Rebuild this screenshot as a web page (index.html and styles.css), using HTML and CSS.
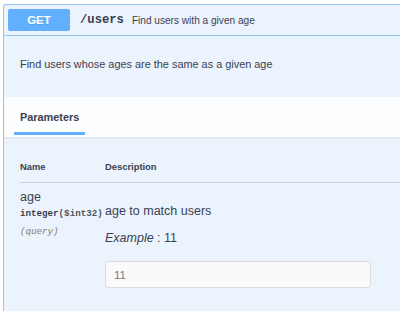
FILE: index.html
```html
<!DOCTYPE html>
<html>
<head>
<meta charset="utf-8">
<link rel="stylesheet" href="styles.css">
</head>
<body>
<div class="page">
  <div class="opblock">
    <div class="summary">
      <span class="method">GET</span>
      <span class="path">/users</span>
      <span class="summary-desc">Find users with a given age</span>
    </div>
    <div class="description">
      <p>Find users whose ages are the same as a given age</p>
    </div>
    <div class="section-header">
      <h4 class="tab"><span>Parameters</span></h4>
    </div>
    <div class="table-container">
      <div class="params">
        <div class="th">Name</div>
        <div class="th">Description</div>
        <div class="name-col">
          <div class="param-name">age</div>
          <div class="param-type">integer<span class="fmt">($int32)</span></div>
          <div class="param-in">(query)</div>
        </div>
        <div class="desc-col">
          <p class="param-desc">age to match users</p>
          <p class="example"><i>Example</i> : 11</p>
          <div class="input">11</div>
        </div>
      </div>
    </div>
  </div>
</div>
</body>
</html>
```
FILE: styles.css
```css
html, body {
  margin: 0;
  padding: 0;
  background: #ffffff;
  overflow: hidden;
}
.page {
  padding: 4px 0 0 3px;
  width: 440px;
  font-family: "Liberation Sans", Arial, sans-serif;
  color: #3b4151;
}
.opblock {
  border: 1px solid #93c5f8;
  border-right: none;
  border-radius: 3px 0 0 0;
  background: #ebf3fc;
  height: 340px;
}
.summary {
  display: flex;
  align-items: center;
  padding: 4px;
  border-bottom: 1px solid #93c5f8;
}
.method {
  width: 62px;
  height: 22px;
  display: flex;
  align-items: center;
  justify-content: center;
  background: #61affe;
  color: #ffffff;
  font-weight: bold;
  font-size: 11.5px;
  border-radius: 2px;
  text-shadow: 0 1px 0 rgba(0,0,0,0.1);
}
.path {
  margin-left: 10px;
  font-family: "Liberation Mono", "Courier New", monospace;
  font-weight: bold;
  font-size: 12.2px;
  color: #3b4151;
}
.summary-desc {
  margin-left: 8px;
  font-size: 10.1px;
  color: #3b4151;
}
.description {
  padding: 22px 16px 26px;
}
.description p {
  margin: 0;
  font-size: 10.9px;
  line-height: 13px;
}
.section-header {
  height: 40px;
  padding: 0 16px;
  background: rgba(255,255,255,0.82);
  box-shadow: 0 1px 2px rgba(0,0,0,0.08);
  display: flex;
  align-items: center;
}
.tab {
  margin: 0;
  font-size: 10.9px;
  font-weight: bold;
  line-height: 13px;
  color: #3b4151;
}
.tab span {
  position: relative;
}
.tab span::after {
  content: "";
  position: absolute;
  left: -10%;
  width: 120%;
  bottom: -12px;
  height: 3px;
  background: #61affe;
}
.table-container {
  padding: 16px 0 0 16px;
}
.params {
  display: grid;
  grid-template-columns: 85px 1fr;
}
.th {
  font-size: 9.4px;
  font-weight: bold;
  line-height: 10px;
  padding: 9px 0 10px;
  border-bottom: 1px solid rgba(59,65,81,0.2);
}
.name-col {
  padding-top: 7px;
}
.param-name {
  font-size: 12.5px;
  line-height: 15px;
}
.param-type {
  font-family: "Liberation Mono", "Courier New", monospace;
  font-weight: bold;
  font-size: 9.2px;
  line-height: 11px;
  padding: 3px 0;
}
.fmt {
  color: #505560;
}
.param-in {
  margin-top: 4px;
  font-family: "Liberation Mono", "Courier New", monospace;
  font-style: italic;
  font-size: 9.2px;
  line-height: 11px;
  color: #808080;
}
.desc-col {
  padding-top: 22px;
}
.desc-col p {
  margin: 0;
  font-size: 12.5px;
  line-height: 13px;
}
.example {
  padding-top: 14px;
}
.input {
  margin-top: 16px;
  height: 25px;
  width: 256px;
  padding: 0 0 0 8px;
  border: 1px solid #dcdcdc;
  border-radius: 3px;
  background: #fafafa;
  display: flex;
  align-items: center;
  font-size: 11.5px;
  color: #777777;
}
```
